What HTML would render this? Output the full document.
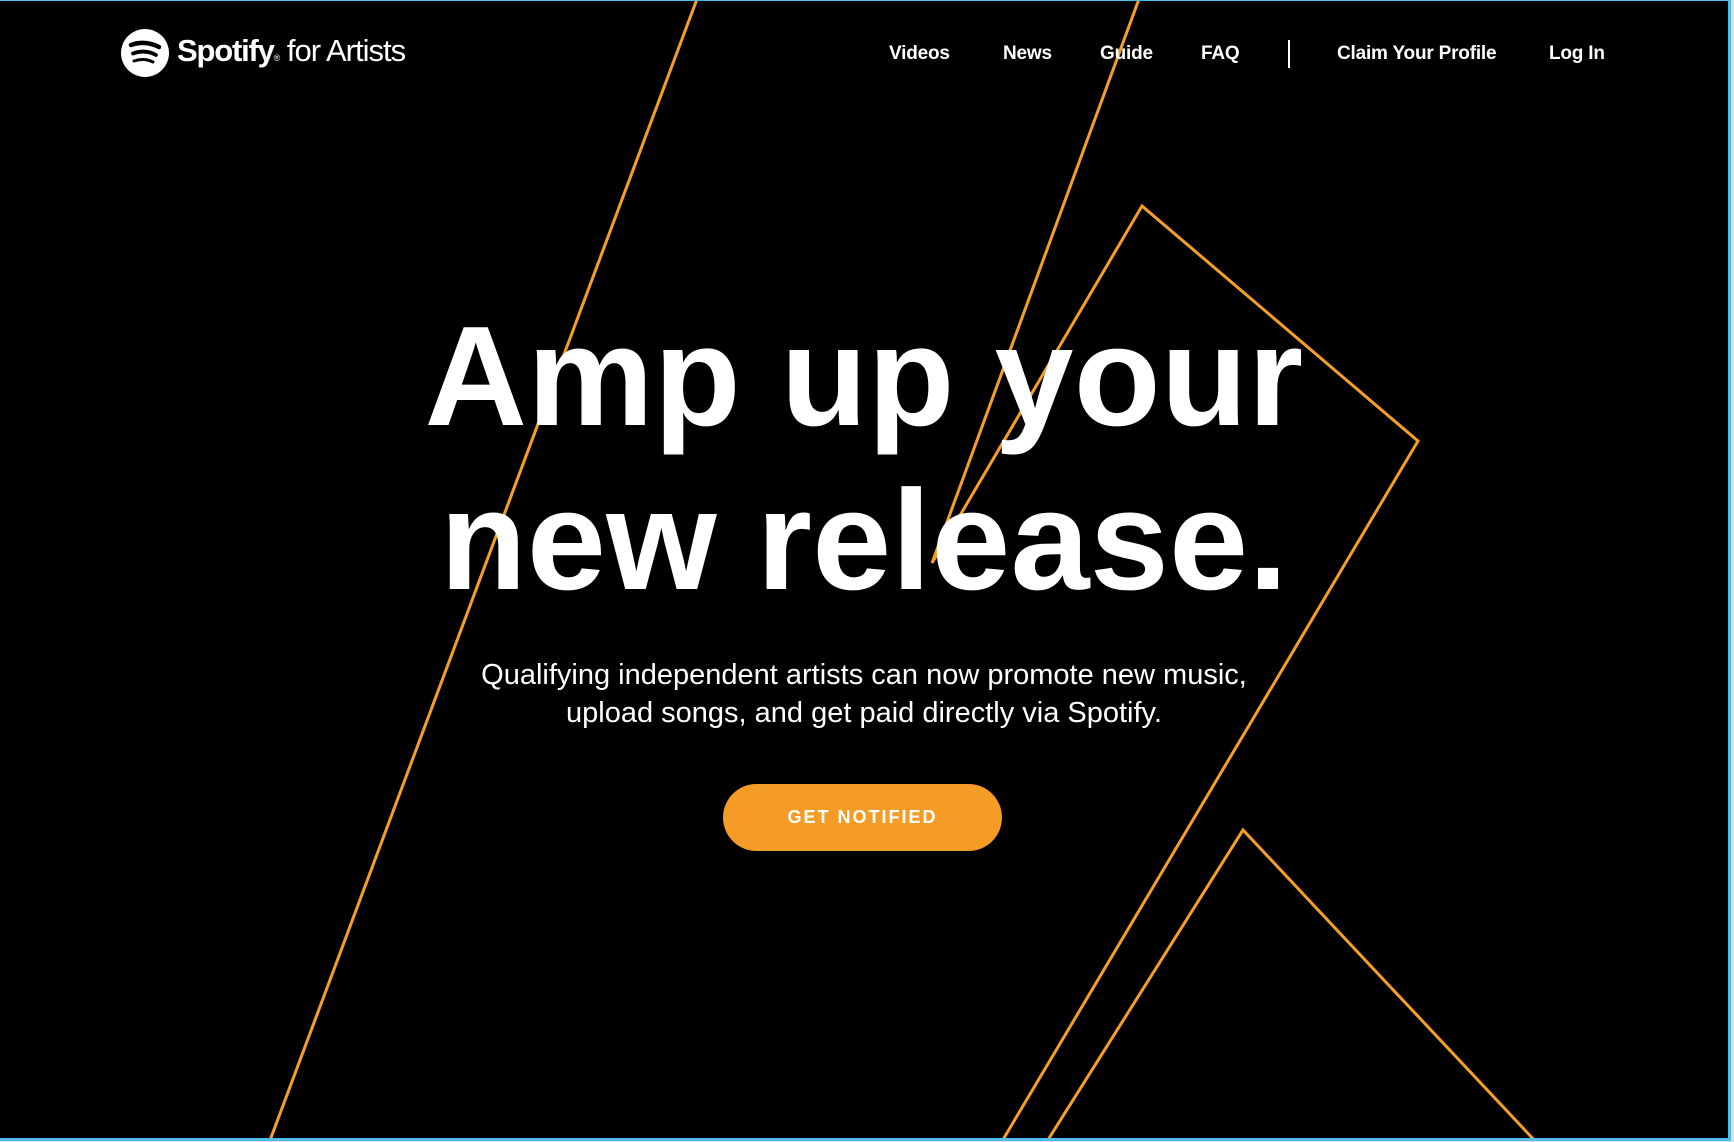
<!DOCTYPE html>
<html><head><meta charset="utf-8"><style>
html,body{margin:0;padding:0;background:#ddd;}
body{width:1734px;height:1142px;overflow:hidden;position:relative;font-family:"Liberation Sans",sans-serif;}
#page{position:absolute;left:0;top:0;width:1728px;height:1137px;background:#000;border-right:3px solid #4dbde9;border-bottom:3px solid #4dbde9;border-top:1px solid #4dbde9;box-sizing:content-box;overflow:hidden}
svg.bg{position:absolute;left:0;top:0}
.nav a{position:absolute;top:42px;color:#fff;font-weight:bold;font-size:19px;text-decoration:none;letter-spacing:-0.2px}
.div{position:absolute;left:1288px;top:39px;width:2px;height:28px;background:#fff}
.logo{position:absolute;left:121px;top:28px}
.brand{position:absolute;left:177px;top:32px;color:#fff;font-size:31px;white-space:nowrap;letter-spacing:-1px}
.brand b{letter-spacing:-1.2px}
h1{position:absolute;left:0;width:1728px;top:294px;margin:0;text-align:center;color:#fff;font-weight:bold;font-size:142px;line-height:164px;letter-spacing:0.3px}
p.sub{position:absolute;left:0;width:1728px;top:655px;margin:0;text-align:center;color:#fff;font-size:29px;line-height:38px;letter-spacing:0}
.btn{position:absolute;left:723px;top:783px;width:279px;height:67px;border-radius:34px;background:#f49c25;color:#fff;font-weight:bold;font-size:18px;letter-spacing:2px;text-align:center;line-height:67px}
</style></head><body>
<div id="page">
<svg class="bg" width="1734" height="1142" viewBox="0 0 1734 1142">
<g fill="none" stroke="#f59f27" stroke-width="3">
<line x1="697" y1="-2" x2="269" y2="1142"/>
<polyline points="1139,-2 932,562 1142,205 1418,440 1001,1142"/>
<polyline points="1046,1142 1243,829 1537,1142"/>
</g>
</svg>
<svg class="logo" width="48" height="48" viewBox="0 0 48 48">
<circle cx="24" cy="24" r="24" fill="#fff"/>
<g fill="none" stroke="#000" stroke-linecap="round">
<path d="M10 16 Q24 11 38 18" stroke-width="4.5"/>
<path d="M12 24.5 Q24 20 35 26" stroke-width="3.8"/>
<path d="M13 32 Q23 28.5 32 33" stroke-width="3"/>
</g>
</svg>
<div class="brand"><b>Spotify</b><span style="font-size:9px">®</span> <span style="font-weight:normal">for Artists</span></div>
<div class="nav">
<a style="left:889px">Videos</a>
<a style="left:1003px">News</a>
<a style="left:1100px">Guide</a>
<a style="left:1201px">FAQ</a>
<div class="div"></div>
<a style="left:1337px">Claim Your Profile</a>
<a style="left:1549px">Log In</a>
</div>
<h1>Amp up your<br>new release.</h1>
<p class="sub">Qualifying independent artists can now promote new music,<br>upload songs, and get paid directly via Spotify.</p>
<div class="btn">GET NOTIFIED</div>
</div>
</body></html>
